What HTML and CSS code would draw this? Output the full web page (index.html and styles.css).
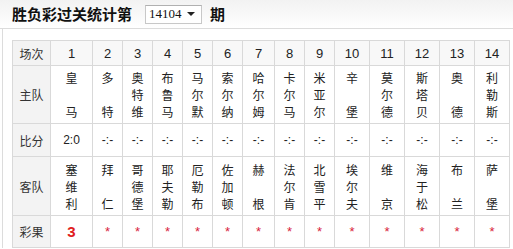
FILE: index.html
```html
<!DOCTYPE html>
<html>
<head>
<meta charset="utf-8">
<link rel="stylesheet" href="styles.css">
</head>
<body>
<div class="bar">
  <span class="title">胜负彩过关统计第</span>
  <span class="select"><span class="sel-text">14104</span><span class="sel-arrow"></span></span>
  <span class="title">期</span>
</div>
<div class="box">
<table class="grid">
  <colgroup>
    <col style="width:38px"><col style="width:42px"><col style="width:30px"><col style="width:30px"><col style="width:30px"><col style="width:30px"><col style="width:30px"><col style="width:32px"><col style="width:30px"><col style="width:30px"><col style="width:35px"><col style="width:35px"><col style="width:35px"><col style="width:35px"><col style="width:35px">
  </colgroup>
  <tr class="r-head">
    <td class="lab">场次</td><td>1</td><td>2</td><td>3</td><td>4</td><td>5</td><td>6</td><td>7</td><td>8</td><td>9</td><td>10</td><td>11</td><td>12</td><td>13</td><td>14</td>
  </tr>
  <tr class="r-team">
    <td class="lab">主队</td>
    <td><span class="v">皇</span><span class="v"></span><span class="v">马</span></td>
    <td><span class="v">多</span><span class="v"></span><span class="v">特</span></td>
    <td><span class="v">奥</span><span class="v">特</span><span class="v">维</span></td>
    <td><span class="v">布</span><span class="v">鲁</span><span class="v">马</span></td>
    <td><span class="v">马</span><span class="v">尔</span><span class="v">默</span></td>
    <td><span class="v">索</span><span class="v">尔</span><span class="v">纳</span></td>
    <td><span class="v">哈</span><span class="v">尔</span><span class="v">姆</span></td>
    <td><span class="v">卡</span><span class="v">尔</span><span class="v">马</span></td>
    <td><span class="v">米</span><span class="v">亚</span><span class="v">尔</span></td>
    <td><span class="v">辛</span><span class="v"></span><span class="v">堡</span></td>
    <td><span class="v">莫</span><span class="v">尔</span><span class="v">德</span></td>
    <td><span class="v">斯</span><span class="v">塔</span><span class="v">贝</span></td>
    <td><span class="v">奥</span><span class="v"></span><span class="v">德</span></td>
    <td><span class="v">利</span><span class="v">勒</span><span class="v">斯</span></td>
  </tr>
  <tr class="r-score">
    <td class="lab">比分</td><td>2:0</td><td>-:-</td><td>-:-</td><td>-:-</td><td>-:-</td><td>-:-</td><td>-:-</td><td>-:-</td><td>-:-</td><td>-:-</td><td>-:-</td><td>-:-</td><td>-:-</td><td>-:-</td>
  </tr>
  <tr class="r-team r-away">
    <td class="lab">客队</td>
    <td><span class="v">塞</span><span class="v">维</span><span class="v">利</span></td>
    <td><span class="v">拜</span><span class="v"></span><span class="v">仁</span></td>
    <td><span class="v">哥</span><span class="v">德</span><span class="v">堡</span></td>
    <td><span class="v">耶</span><span class="v">夫</span><span class="v">勒</span></td>
    <td><span class="v">厄</span><span class="v">勒</span><span class="v">布</span></td>
    <td><span class="v">佐</span><span class="v">加</span><span class="v">顿</span></td>
    <td><span class="v">赫</span><span class="v"></span><span class="v">根</span></td>
    <td><span class="v">法</span><span class="v">尔</span><span class="v">肯</span></td>
    <td><span class="v">北</span><span class="v">雪</span><span class="v">平</span></td>
    <td><span class="v">埃</span><span class="v">尔</span><span class="v">夫</span></td>
    <td><span class="v">维</span><span class="v"></span><span class="v">京</span></td>
    <td><span class="v">海</span><span class="v">于</span><span class="v">松</span></td>
    <td><span class="v">布</span><span class="v"></span><span class="v">兰</span></td>
    <td><span class="v">萨</span><span class="v"></span><span class="v">堡</span></td>
  </tr>
  <tr class="r-result">
    <td class="lab">彩果</td><td class="hit">3</td><td class="star">*</td><td class="star">*</td><td class="star">*</td><td class="star">*</td><td class="star">*</td><td class="star">*</td><td class="star">*</td><td class="star">*</td><td class="star">*</td><td class="star">*</td><td class="star">*</td><td class="star">*</td><td class="star">*</td>
  </tr>
</table>
</div>
</body>
</html>
```

FILE: styles.css
```css
html, body {
  margin: 0;
  padding: 0;
  background: #fff;
  font-family: "Liberation Sans", "Noto Sans CJK SC", sans-serif;
  font-size: 12px;
  color: #222;
}
.bar {
  border-bottom: 1px solid #dcdcdc;
  background: linear-gradient(#f2f2f2, #ffffff);
  display: flex;
  align-items: center;
  padding-left: 12px;
  box-sizing: border-box;
  height: 29px;
}
.title {
  font-family: "Noto Sans CJK SC", sans-serif;
  font-weight: bold;
  font-size: 15px;
  color: #111;
  line-height: 20px;
}
.select {
  margin-left: 13px;
  margin-right: 8px;
  width: 57px;
  height: 19px;
  box-sizing: border-box;
  border: 1px solid #c8c8c8;
  border-top-color: #b0b0b0;
  background: #fff;
  display: flex;
  align-items: center;
  padding-left: 3px;
}
.sel-text {
  font-family: "Liberation Serif", serif;
  font-size: 13px;
  color: #111;
  flex: 1;
}
.sel-arrow {
  width: 0;
  height: 0;
  border-left: 4px solid transparent;
  border-right: 4px solid transparent;
  border-top: 4px solid #222;
  margin-right: 6px;
}
.box {
  border-left: 1px solid #dcdcdc;
  margin-left: 2px;
  padding: 11px 0 0 9px;
}
.grid {
  border-collapse: collapse;
  table-layout: fixed;
  width: 497px;
}
.grid td {
  border: 1px solid #d9d9d9;
  text-align: center;
  vertical-align: middle;
  padding: 0;
  color: #222;
}
.grid td.lab {
  background: #f3f3f3;
  font-family: "Noto Sans CJK SC", sans-serif;
  color: #333;
  font-size: 12px;
}
.r-head td {
  height: 24px;
  background: #f8f8f8;
  font-size: 13px;
}
.r-team td {
  height: 57px;
  font-family: "Noto Sans CJK SC", sans-serif;
  font-size: 12px;
}
.r-away td {
  height: 58px;
}
.v {
  display: block;
  height: 17px;
  line-height: 17px;
}
.r-score td {
  height: 32px;
  font-size: 12px;
}
.r-result td {
  height: 31px;
}
.grid td.hit {
  color: #e02020;
  font-weight: bold;
  font-size: 15px;
}
.grid td.star {
  color: #d8243c;
  font-size: 13px;
}
```
